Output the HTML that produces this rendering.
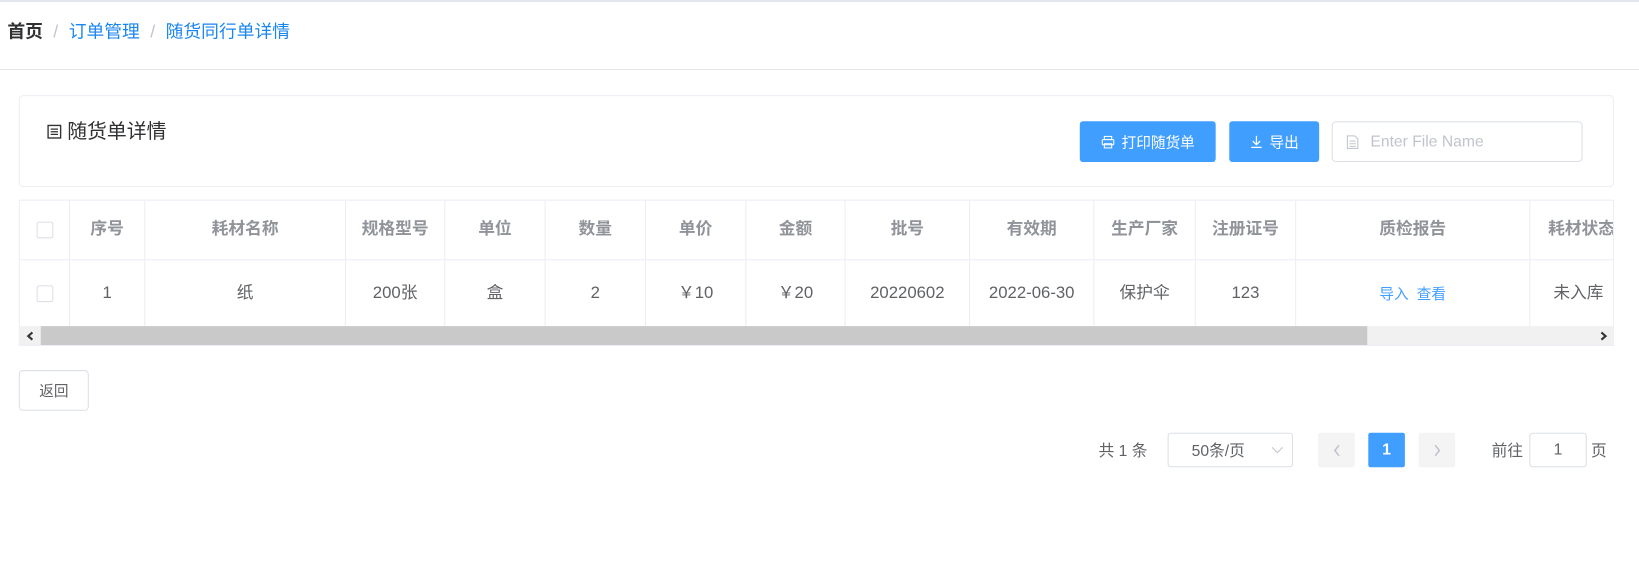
<!DOCTYPE html>
<html><head><meta charset="utf-8"><style>
*{box-sizing:border-box;margin:0;padding:0}
body{width:1639px;height:570px;background:#fff;font-family:"Liberation Sans","Noto Sans CJK SC",sans-serif;position:relative;overflow:hidden;color:#606266}
#w{position:absolute;left:0;top:0;width:1568px;height:546px;transform:scale(1.0453);transform-origin:0 0}
.a{position:absolute}
.top{left:0;top:0;width:1568px;height:2px;background:#e4e7ed}
.bc{left:7px;top:21px;font-size:17px;line-height:20px}
.bc b{color:#303133}
.bc .s{color:#c0c4cc;margin:0 10px}
.bc .l{color:#1a86f0}
.hr{left:0;top:66px;width:1568px;height:1px;background:#e4e7ed}
.card{left:18px;top:91px;width:1526px;height:88px;border:1px solid #ebeef5;border-radius:4px}
.btn{background:#409eff;color:#fff;border-radius:3px;font-size:14px;display:flex;align-items:center;justify-content:center;height:39px;top:116px}
.inp{left:1274px;top:116px;width:240px;height:39px;border:1px solid #dcdfe6;border-radius:4px;color:#c0c4cc;font-size:15px;padding-left:36px;line-height:37px}
.tbl{left:18px;top:191px;width:1526px;height:140px;border:1px solid #ebeef5;overflow:hidden}
.c{position:absolute;display:flex;align-items:center;justify-content:center;border-right:1px solid #ebeef5;font-size:16px;line-height:20px}
.h{top:0;height:57px;color:#909399;font-weight:bold;border-bottom:1px solid #ebeef5}
.d{top:57px;height:63px;color:#606266}
.cb{width:16px;height:16px;border:1px solid #dcdfe6;border-radius:2px;background:#fff}
.sb{left:0;top:120px;width:1526px;height:19px;background:#f1f1f1}
.th{position:absolute;left:20px;top:0;width:1269px;height:19px;background:#c9c9c9}
.pg{top:414px;height:33px;font-size:15px;display:flex;align-items:center}
</style></head><body><div id="w">
<div class="a top"></div>
<div class="a bc"><b>首页</b><span class="s">/</span><span class="l">订单管理</span><span class="s">/</span><span class="l">随货同行单详情</span></div>
<div class="a hr"></div>
<div class="a card"></div>
<div class="a" style="left:45px;top:116px;font-size:19px;color:#303133;line-height:22px">
<svg width="14" height="14" viewBox="0 0 14 14" style="vertical-align:-1px"><rect x="1" y="1" width="12" height="12" fill="none" stroke="#303133" stroke-width="1.3"/><path d="M3.5 4.5h7M3.5 7h7M3.5 9.5h7" stroke="#303133" stroke-width="1.2"/></svg> 随货单详情</div>
<div class="a btn" style="left:1033px;width:130px"><svg width="14" height="14" viewBox="0 0 14 14" style="margin-right:6px"><rect x="3.5" y="1.5" width="7" height="3" fill="none" stroke="#fff"/><rect x="1.5" y="4.5" width="11" height="5" rx="1" fill="none" stroke="#fff"/><rect x="3.5" y="8.5" width="7" height="4" fill="none" stroke="#fff"/></svg>打印随货单</div>
<div class="a btn" style="left:1176px;width:86px"><svg width="12" height="13" viewBox="0 0 12 13" style="margin-right:7px"><path d="M6 1v8M2.5 6l3.5 3.5L9.5 6M1 12h10" stroke="#fff" stroke-width="1.2" fill="none"/></svg>导出</div>
<div class="a inp"><svg class="a" style="left:13px;top:12px" width="12" height="14" viewBox="0 0 12 14"><path d="M1 1h7l3 3v9H1z M3 6h6M3 8.5h6M3 11h6" stroke="#c0c4cc" fill="none"/></svg>Enter File Name</div>
<div class="a tbl">
<div class="c h" style="left:0;width:48px"><div class="cb"></div></div>
<div class="c h" style="left:48px;width:72px">序号</div>
<div class="c h" style="left:120px;width:192px">耗材名称</div>
<div class="c h" style="left:312px;width:95px">规格型号</div>
<div class="c h" style="left:407px;width:96px">单位</div>
<div class="c h" style="left:503px;width:96px">数量</div>
<div class="c h" style="left:599px;width:96px">单价</div>
<div class="c h" style="left:695px;width:95px">金额</div>
<div class="c h" style="left:790px;width:119px">批号</div>
<div class="c h" style="left:909px;width:119px">有效期</div>
<div class="c h" style="left:1028px;width:97px">生产厂家</div>
<div class="c h" style="left:1125px;width:96px">注册证号</div>
<div class="c h" style="left:1221px;width:224px">质检报告</div>
<div class="c h" style="left:1445px;width:120px;justify-content:flex-start;padding-left:17px">耗材状态</div>
<div class="c d" style="left:0;width:48px"><div class="cb"></div></div>
<div class="c d" style="left:48px;width:72px">1</div>
<div class="c d" style="left:120px;width:192px">纸</div>
<div class="c d" style="left:312px;width:95px">200张</div>
<div class="c d" style="left:407px;width:96px">盒</div>
<div class="c d" style="left:503px;width:96px">2</div>
<div class="c d" style="left:599px;width:96px">￥10</div>
<div class="c d" style="left:695px;width:95px">￥20</div>
<div class="c d" style="left:790px;width:119px">20220602</div>
<div class="c d" style="left:909px;width:119px">2022-06-30</div>
<div class="c d" style="left:1028px;width:97px">保护伞</div>
<div class="c d" style="left:1125px;width:96px">123</div>
<div class="c d" style="left:1221px;width:224px;color:#409eff;font-size:14px">导入&nbsp;&nbsp;查看</div>
<div class="c d" style="left:1445px;width:120px;justify-content:flex-start;padding-left:22px">未入库</div>
<div class="a sb"><div class="th"></div>
<svg class="a" style="left:6px;top:5px" width="8" height="9" viewBox="0 0 8 9"><path d="M6 1L2 4.5 6 8" stroke="#333" stroke-width="2" fill="none"/></svg>
<svg class="a" style="left:1511px;top:5px" width="8" height="9" viewBox="0 0 8 9"><path d="M2 1l4 3.5L2 8" stroke="#333" stroke-width="2" fill="none"/></svg>
</div></div>
<div class="a" style="left:18px;top:354px;width:67px;height:39px;border:1px solid #dcdfe6;border-radius:4px;font-size:14px;color:#606266;display:flex;align-items:center;justify-content:center">返回</div>
<div class="a pg" style="left:1051px;color:#606266">共 1 条</div>
<div class="a pg" style="left:1117px;width:120px;border:1px solid #dcdfe6;border-radius:3px;padding-left:22px">50条/页<svg class="a" style="right:8px;top:12px" width="12" height="8" viewBox="0 0 12 8"><path d="M1 1l5 5 5-5" stroke="#c0c4cc" fill="none"/></svg></div>
<div class="a pg" style="left:1261px;width:35px;background:#f4f4f5;border-radius:2px;justify-content:center"><svg width="8" height="12" viewBox="0 0 8 12"><path d="M6 1L2 6l4 5" stroke="#c0c4cc" stroke-width="1.5" fill="none"/></svg></div>
<div class="a pg" style="left:1309px;width:35px;background:#409eff;border-radius:2px;justify-content:center;color:#fff;font-weight:bold">1</div>
<div class="a pg" style="left:1357px;width:35px;background:#f4f4f5;border-radius:2px;justify-content:center"><svg width="8" height="12" viewBox="0 0 8 12"><path d="M2 1l4 5-4 5" stroke="#c0c4cc" stroke-width="1.5" fill="none"/></svg></div>
<div class="a pg" style="left:1427px">前往</div>
<div class="a pg" style="left:1463px;width:55px;border:1px solid #dcdfe6;border-radius:3px;justify-content:center">1</div>
<div class="a pg" style="left:1522px">页</div>
</div></body></html>
